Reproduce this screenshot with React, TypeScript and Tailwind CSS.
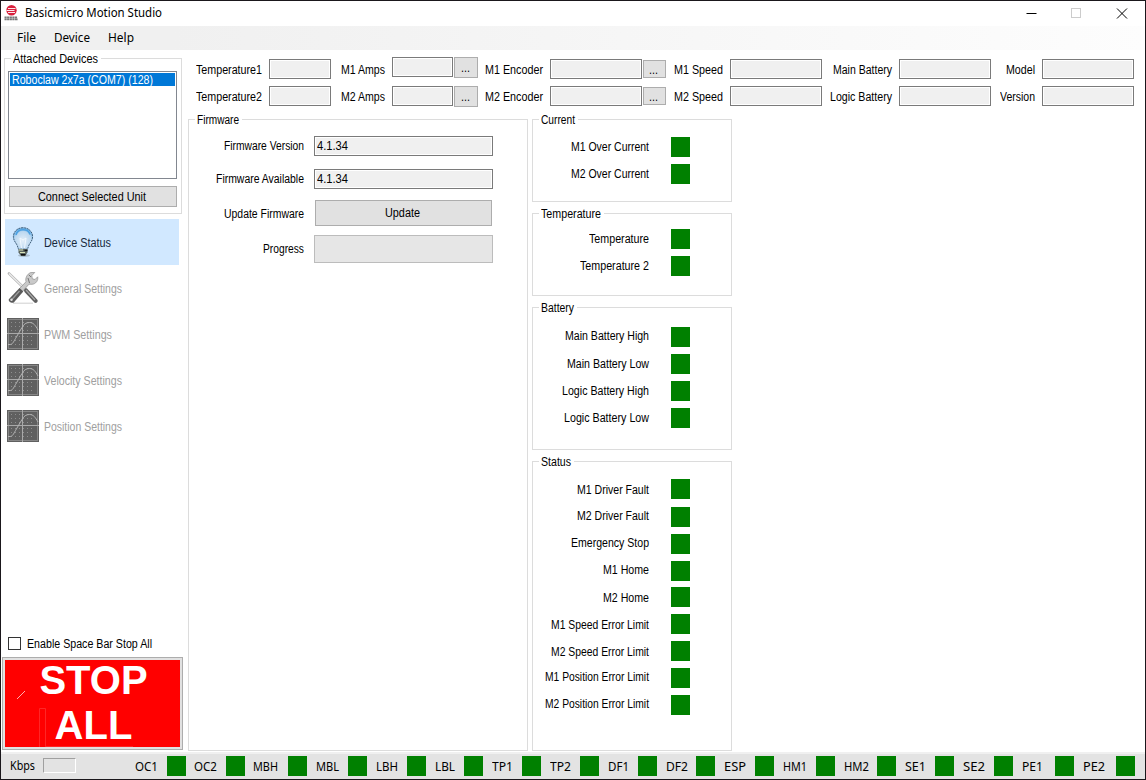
import { useLayoutEffect, useRef, useState } from "react";
import type { ReactNode } from "react";

const UI = "font-['Liberation_Sans',Arial,sans-serif] text-[12px] leading-[14px]";
const SYS = "font-['Noto_Sans','Open_Sans',sans-serif] text-[12px] leading-[16px]";

/** Single-line text condensed horizontally to occupy exactly `w` pixels. */
function Fit({ w, className = "", children }: { w: number; className?: string; children: ReactNode }) {
  const ref = useRef<HTMLSpanElement>(null);
  const [scale, setScale] = useState(1);
  useLayoutEffect(() => {
    if (ref.current) setScale(w / parseFloat(getComputedStyle(ref.current).width));
  }, [w]);
  return (
    <span className={`block shrink-0 ${className}`} style={{ width: w }}>
      <span ref={ref} className="block w-max origin-left whitespace-nowrap" style={{ transform: `scaleX(${scale})` }}>
        {children}
      </span>
    </span>
  );
}

function Group({ title, w, className, children }: { title: string; w: number; className: string; children: ReactNode }) {
  return (
    <section className={`flex shrink-0 flex-col items-start border border-[#dcdcdc] ${className}`}>
      <div className="-mt-[7px] ml-[6px] bg-white pr-[3px] pl-[2px]">
        <Fit w={w}>{title}</Fit>
      </div>
      {children}
    </section>
  );
}

function Field({ className, children }: { className: string; children?: ReactNode }) {
  return (
    <div className={`h-5 shrink-0 border border-[#7a7a7a] bg-white p-px ${className}`}>
      <div className="h-full bg-[#f0f0f0] pt-px pl-px">{children}</div>
    </div>
  );
}

function Dots({ className }: { className: string }) {
  return (
    <button className={`ml-px flex shrink-0 items-center justify-center border border-[#adadad] bg-[#e1e1e1] pt-px pr-[2px] ${className}`}>
      <Fit w={9}>...</Fit>
    </button>
  );
}

function Slot({ w, className, children }: { w: number; className: string; children: string }) {
  return (
    <div className={`flex shrink-0 justify-end ${className}`}>
      <Fit w={w}>{children}</Fit>
    </div>
  );
}

function Readings({ n, version }: { n: 1 | 2; version: boolean }) {
  const lift = n === 1 ? "-mt-[2px]" : "";
  return (
    <div className="flex h-[27px] items-start">
      <Slot w={66} className="w-[81px] pt-1 pr-[7px]">{`Temperature${n}`}</Slot>
      <Field className="w-[62px]" />
      <Slot w={44} className="w-[61px] pt-1 pr-[7px]">{`M${n} Amps`}</Slot>
      <Field className={`w-[61px] ${lift}`} />
      <Dots className={`h-[21px] w-6 ${lift}`} />
      <Slot w={58} className="w-[72px] pt-1 pr-[7px]">{`M${n} Encoder`}</Slot>
      <Field className="w-[92px]" />
      <Dots className="mt-px h-[18px] w-[23px]" />
      <Slot w={49} className="w-[64px] pt-1 pr-[7px]">{`M${n} Speed`}</Slot>
      <Field className="w-[92px]" />
      <Slot w={version ? 62 : 59} className="w-[77px] pt-1 pr-[7px]">{version ? "Logic Battery" : "Main Battery"}</Slot>
      <Field className="w-[92px]" />
      <Slot w={version ? 35 : 29} className="w-[51px] pt-1 pr-[7px]">{version ? "Version" : "Model"}</Slot>
      <Field className="w-[92px]" />
    </div>
  );
}

type Row = [label: string, width: number, gap: string, drop: string];

const current: Row[] = [
  ["M1 Over Current", 78, "mt-[10px]", "pt-[3px]"],
  ["M2 Over Current", 78, "mt-[7px]", "pt-[3px]"],
];
const temperature: Row[] = [
  ["Temperature", 60, "mt-[8px]", "pt-[3px]"],
  ["Temperature 2", 69, "mt-[7px]", "pt-[3px]"],
];
const battery: Row[] = [
  ["Main Battery High", 84, "mt-[12px]", "pt-[2px]"],
  ["Main Battery Low", 82, "mt-[7px]", "pt-[3px]"],
  ["Logic Battery High", 87, "mt-[7px]", "pt-[3px]"],
  ["Logic Battery Low", 85, "mt-[7px]", "pt-[3px]"],
];
const status: Row[] = [
  ["M1 Driver Fault", 72, "mt-[10px]", "pt-[4px]"],
  ["M2 Driver Fault", 72, "mt-[8px]", "pt-[2px]"],
  ["Emergency Stop", 78, "mt-[7px]", "pt-[2px]"],
  ["M1 Home", 46, "mt-[7px]", "pt-[2px]"],
  ["M2 Home", 46, "mt-[6px]", "pt-[4px]"],
  ["M1 Speed Error Limit", 98, "mt-[7px]", "pt-[4px]"],
  ["M2 Speed Error Limit", 98, "mt-[7px]", "pt-[4px]"],
  ["M1 Position Error Limit", 104, "mt-[7px]", "pt-[2px]"],
  ["M2 Position Error Limit", 104, "mt-[7px]", "pt-[2px]"],
];

function Lamps({ rows }: { rows: Row[] }) {
  return (
    <>
      {rows.map(([label, w, gap, drop]) => (
        <div key={label} className={`flex h-5 items-start ${gap}`}>
          <Slot w={w} className={`w-[138px] pr-[22px] ${drop}`}>{label}</Slot>
          <div className="h-5 w-[19px] bg-[#008000]" />
        </div>
      ))}
    </>
  );
}

const bar: [label: string, width: number, slot: string][] = [
  ["OC1", 23, "w-[32px]"],
  ["OC2", 23, "w-[40px] pl-2"],
  ["MBH", 25, "w-[43px] pl-[8px]"],
  ["MBL", 23, "w-[41px] pl-[9px]"],
  ["LBH", 22, "w-[40px] pl-[9px]"],
  ["LBL", 20, "w-[38px] pl-[9px]"],
  ["TP1", 21, "w-[39px] pl-[9px]"],
  ["TP2", 21, "w-[39px] pl-[9px]"],
  ["DF1", 21, "w-[39px] pl-[9px]"],
  ["DF2", 22, "w-[39px] pl-[9px]"],
  ["ESP", 22, "w-[40px] pl-[9px]"],
  ["HM1", 24, "w-[42px] pl-[9px]"],
  ["HM2", 25, "w-[42px] pl-[9px]"],
  ["SE1", 21, "w-[39px] pl-[9px]"],
  ["SE2", 22, "w-[40px] pl-[9px]"],
  ["PE1", 21, "w-[42px] pl-[9px]"],
  ["PE2", 22, "w-[42px] pl-[9px]"],
];

function Logo() {
  return (
    <svg width="15" height="16" viewBox="0 0 15 16">
      <circle cx="7.500" cy="5.300" r="5.200" fill="#d8203c" />
      <path d="M4 3.500h7.500M2.500 5.500h8M4 7.500h7" stroke="#fff" strokeWidth="0.900" />
      <path d="M0.500 12.300h13M0.500 14.300h13.500" stroke="#777" strokeWidth="1.700" strokeDasharray="2.200 0.400" />
    </svg>
  );
}

function BulbIcon() {
  return (
    <svg width="32" height="32" viewBox="0 0 32 32">
      <defs>
        <radialGradient id="glass" cx="0.5" cy="0.6" r="0.6">
          <stop offset="0" stopColor="#e4eff9" />
          <stop offset="0.7" stopColor="#bcd8f0" />
          <stop offset="1" stopColor="#62abe3" />
        </radialGradient>
      </defs>
      <ellipse cx="17" cy="29.500" rx="6" ry="1.500" fill="#a9bccd" />
      <path
        d="M16 1.700c-5.600 0-9.600 4-9.600 9 0 3.700 2.200 5.700 3.600 8.300 .8 1.500 .9 3.200 1.600 4.200h8.800c.7-1 .8-2.700 1.600-4.200 1.400-2.600 3.600-4.600 3.600-8.300 0-5-4-9-9.600-9z"
        fill="url(#glass)"
        stroke="#34536f"
        strokeWidth="0.900"
        strokeDasharray="2 0.700"
      />
      <path d="M9 9c.7-3 3.500-5.300 7-5.300s6.300 2 7 4.800" fill="none" stroke="#4ba0e2" strokeWidth="1.500" />
      <path d="M13 12l1.500 10M19 12l-1.500 10M13 12l3 2 3-2" fill="none" stroke="#f3f9ff" strokeWidth="0.900" />
      <path d="M11.500 23h9v3.500l-2.500 3.500h-4l-2.500-3.500z" fill="#5d6660" />
      <path d="M12 24h4M13 26.500h5" stroke="#d9e2b8" strokeWidth="1.200" />
      <path d="M17.500 24.500h3M14 28.800h4.500" stroke="#111" strokeWidth="1.600" />
    </svg>
  );
}

function ToolsIcon() {
  return (
    <svg width="32" height="32" viewBox="0 0 32 32">
      <path d="M6 31.300h20" stroke="#dedede" strokeWidth="1.500" />
      <path d="M2 1.500L17 16" stroke="#b5b5b5" strokeWidth="2.600" strokeLinecap="round" />
      <path d="M2 1.500L17 16" stroke="#ededed" strokeWidth="1.200" />
      <path d="M16 15l4 1.500 10.500 11.500c.8 1.500-1 3.500-2.800 2.800L17.500 20z" fill="#5f5f5f" />
      <path d="M19 18l9 10" stroke="#a8a8a8" strokeWidth="1.200" />
      <path
        d="M12.500 16.500l6.500-6.700c-.9-3.700 1-7.600 4.600-9.200l4.200-.2-3 3.200 .5 3.200 2.700 .7 2.700-2.700c.7 3.900-2 7.200-5.700 7.500l-3-.1-6.500 7.200z"
        fill="#c9c9c9"
        stroke="#8e8e8e"
        strokeWidth="0.700"
      />
      <path d="M21 6l1.500 5M22 3l2 2" stroke="#777" strokeWidth="1" />
      <path d="M12.500 16l3.800 3.500L7 30.200c-1.800 1.600-6-.6-5.200-3z" fill="#5a5a5a" />
      <path d="M12.500 19L4 28.500" stroke="#9a9a9a" strokeWidth="1.300" />
      <circle cx="4.500" cy="27.800" r="1.200" fill="#ddd" />
    </svg>
  );
}

function ScopeIcon() {
  return (
    <svg width="32" height="32" viewBox="0 0 32 32">
      <rect width="32" height="32" fill="#606060" />
      <rect x="1.500" y="1.500" width="29" height="29" fill="none" stroke="#868686" />
      {[4.5, 8.5, 12.5, 18.5, 22.5, 26.5].map((y) => (
        <path key={y} d={`M4 ${y}h24`} stroke="#8e8e8e" strokeDasharray="1 3" />
      ))}
      <path d="M15.500 0v32M0 15.500h32" stroke="#a9a9a9" />
      <path d="M1 26.500h2c2.500 0 3.500-2.500 5.500-6L15 9.500C17 6 19 4.500 22.500 4.500c4 0 6 3 8.500 7.500" fill="none" stroke="#b4b4b4" strokeWidth="1" />
    </svg>
  );
}

const nav: [label: string, width: number][] = [
  ["Device Status", 67],
  ["General Settings", 78],
  ["PWM Settings", 68],
  ["Velocity Settings", 78],
  ["Position Settings", 78],
];

function Sidebar() {
  return (
    <aside className="flex w-[187px] shrink-0 flex-col items-start">
      <Group title="Attached Devices" w={85} className="mt-2 ml-[3px] h-[156px] w-[178px]">
        <div className="mt-[5px] ml-[3px] h-[108px] w-[169px] border border-[#828790] p-px">
          <div className="h-[13px] bg-[#0078d7] pl-[2px] text-white">
            <Fit w={141}>Roboclaw 2x7a (COM7) (128)</Fit>
          </div>
        </div>
        <button className="mt-[7px] ml-[4px] flex h-[21px] w-[168px] justify-center border border-[#adadad] bg-[#e1e1e1] pt-[3px] pr-[2px]">
          <Fit w={108}>Connect Selected Unit</Fit>
        </button>
      </Group>
      <nav className="mt-[5px] ml-1 w-[174px]">
        {nav.map(([label, w], i) => (
          <div
            key={label}
            className={`flex h-[46px] items-center gap-[5px] pl-[2px] ${i === 0 ? "bg-[#d1e8ff] text-[#16283c]" : "text-[#a0a0a0]"}`}
          >
            {i === 0 ? <BulbIcon /> : i === 1 ? <ToolsIcon /> : <ScopeIcon />}
            <Fit w={w} className="pt-[2px]">{label}</Fit>
          </div>
        ))}
      </nav>
      <div className="mt-[188px] ml-[7px] flex h-[13px] gap-[6px]">
        <div className="size-[13px] border border-[#333] bg-white" />
        <Fit w={125}>Enable Space Bar Stop All</Fit>
      </div>
      <button className="mt-[7px] ml-px h-[93px] w-[181px] border border-[#adadad] bg-[#e1e1e1] p-[2px]">
        <div className="relative flex h-[87px] flex-col items-center bg-[#ff0000] pl-[2px] text-[40px] font-bold text-white">
          <span className="leading-[40px]">STOP</span>
          <span className="leading-[51px]">ALL</span>
          <svg className="absolute top-0 left-0" width="175" height="87" fill="none">
            <path d="M12 39l8-8" stroke="#ffb0b0" />
            <path d="M34.500 87V48.500h6V87M41 86.500h87" stroke="#ff2626" />
          </svg>
        </div>
      </button>
    </aside>
  );
}

function Firmware() {
  return (
    <Group title="Firmware" w={42} className="h-[632px] w-[340px]">
      <div className="mt-[9px] flex">
        <Slot w={80} className="w-[125px] pt-[3px] pr-[10px]">Firmware Version</Slot>
        <Field className="w-[179px]"><Fit w={31}>4.1.34</Fit></Field>
      </div>
      <div className="mt-[13px] flex">
        <Slot w={88} className="w-[125px] pt-[3px] pr-[10px]">Firmware Available</Slot>
        <Field className="w-[179px]"><Fit w={31}>4.1.34</Fit></Field>
      </div>
      <div className="mt-[11px] flex">
        <Slot w={80} className="w-[125px] pt-[7px] pr-[10px]">Update Firmware</Slot>
        <button className="ml-px flex h-[26px] w-[177px] justify-center border border-[#adadad] bg-[#e1e1e1] pt-[5px] pr-[2px]">
          <Fit w={35}>Update</Fit>
        </button>
      </div>
      <div className="mt-[9px] flex">
        <Slot w={41} className="w-[125px] pt-[7px] pr-[10px]">Progress</Slot>
        <div className="h-7 w-[179px] border border-[#bcbcbc] bg-[#e6e6e6]" />
      </div>
    </Group>
  );
}

export default function App() {
  return (
    <div className={`flex h-[780px] w-[1146px] flex-col overflow-hidden border border-[#1a171b] bg-white text-black ${UI}`}>
      <header className={`flex h-[25px] shrink-0 items-start ${SYS}`}>
        <div className="mt-[4px] ml-[3px] w-[15px]"><Logo /></div>
        <Fit w={137} className="mt-[4px] ml-[6px]">Basicmicro Motion Studio</Fit>
        <svg className="mt-[7px] ml-auto mr-[17px]" width="102" height="11" fill="none">
          <path d="M0.500 5.500h10" stroke="#000" />
          <rect x="45.500" y="0.500" width="9" height="9" stroke="#ccc" />
          <path d="M91 0.500l10 10M101 0.500l-10 10" stroke="#000" />
        </svg>
      </header>
      <div className={`flex h-6 shrink-0 bg-linear-to-r from-[#f0f0f0] from-15% to-[#fdfdfd] pt-[4px] pl-[16px] ${SYS}`}>
        <Fit w={19}>File</Fit>
        <Fit w={36} className="ml-[18px]">Device</Fit>
        <Fit w={26} className="ml-[18px]">Help</Fit>
      </div>
      <div className="flex h-[702px] shrink-0">
        <Sidebar />
        <main className="flex flex-col pt-[9px]">
          <Readings n={1} version={false} />
          <Readings n={2} version />
          <div className="mt-[6px] flex gap-1">
            <Firmware />
            <div className="flex flex-col gap-[11px]">
              <Group title="Current" w={34} className="h-[83px] w-[200px]"><Lamps rows={current} /></Group>
              <Group title="Temperature" w={60} className="h-[83px] w-[200px]"><Lamps rows={temperature} /></Group>
              <Group title="Battery" w={33} className="h-[143px] w-[200px]"><Lamps rows={battery} /></Group>
              <Group title="Status" w={30} className="h-[290px] w-[200px]"><Lamps rows={status} /></Group>
            </div>
          </div>
        </main>
      </div>
      <footer className={`flex h-[27px] shrink-0 items-start border-t-2 border-[#f0f0f0] bg-[#e3e3e3] pt-[2px] pl-[9px] ${SYS}`}>
        <Fit w={25} className="mt-[2px]">Kbps</Fit>
        <div className="mt-[2px] mr-[59px] ml-[8px] h-[15px] w-[33px] border border-t-[#a0a0a0] border-r-white border-b-white border-l-[#a0a0a0]" />
        {bar.map(([label, w, slot]) => (
          <div key={label} className="flex shrink-0">
            <div className={`pt-[3px] ${slot}`}><Fit w={w}>{label}</Fit></div>
            <div className="h-5 w-[19px] bg-[#008000]" />
          </div>
        ))}
      </footer>
    </div>
  );
}
